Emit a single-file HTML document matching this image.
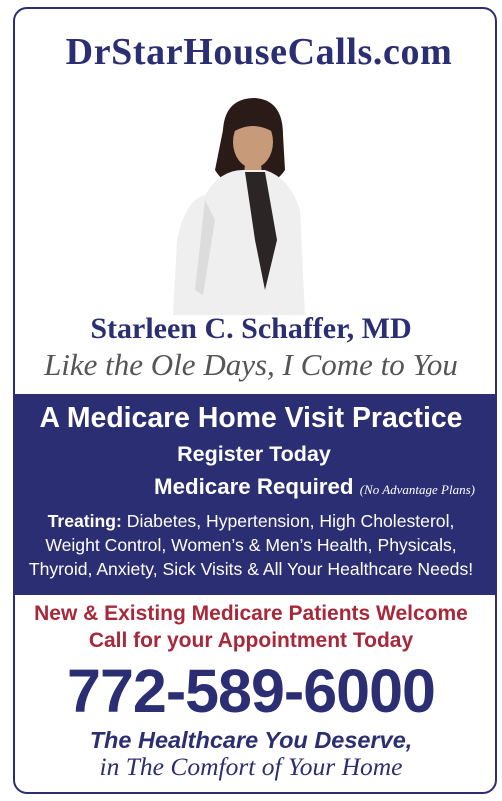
<!DOCTYPE html>
<html><head><style>
*{margin:0;padding:0;box-sizing:border-box}
body{width:502px;height:801px;background:#fff;position:relative;overflow:hidden;font-family:"Liberation Sans",sans-serif}
.box{position:absolute;left:13px;top:7px;width:484px;height:787px;border:2.5px solid #2b2e72;border-radius:14px;overflow:hidden}
.t{position:absolute;left:0;width:502px;text-align:center;white-space:nowrap}
.band{position:absolute;left:13px;top:394px;width:484px;height:201px;background:#2b2e72}
</style></head><body>
<div class="box"></div>
<div class="band"></div>
<div class="t" style="top:30px;left:8px;font:bold 38px 'Liberation Serif',serif;color:#2b2e72;letter-spacing:0.6px">DrStarHouseCalls.com</div>
<svg style="position:absolute;left:165px;top:90px" width="175" height="225" viewBox="0 0 175 225">
<path d="M58 40 Q60 8 90 8 Q118 10 118 45 L120 80 Q110 95 100 88 L80 88 Q62 100 50 80 Z" fill="#2a1a18"/>
<ellipse cx="88" cy="52" rx="20" ry="26" fill="#c79a7a"/>
<path d="M66 30 Q88 18 110 32 L108 42 Q88 30 68 42 Z" fill="#2a1a18"/>
<path d="M80 74 L96 74 L98 95 L78 95 Z" fill="#c79a7a"/>
<path d="M40 105 Q55 80 78 80 L100 80 Q125 88 135 120 L140 225 L8 225 L12 150 Q20 110 40 105 Z" fill="#efefef"/>
<path d="M80 82 L100 82 L112 150 L100 200 L90 150 Z" fill="#2b2525"/>
<path d="M40 110 L30 200 L38 205 L50 130 Z" fill="#dcdcdc"/>
</svg>
<div class="t" style="top:312px;font:bold 30px 'Liberation Serif',serif;color:#2b2e72">Starleen C. Schaffer, MD</div>
<div class="t" style="top:347px;font:italic 31px 'Liberation Serif',serif;color:#555">Like the Ole Days, I Come to You</div>
<div class="t" style="top:402px;font:bold 28.4px 'Liberation Sans',sans-serif;color:#fff">A Medicare Home Visit Practice</div>
<div class="t" style="top:442px;left:254px;width:auto;transform:translateX(-50%);font:bold 21.5px 'Liberation Sans',sans-serif;color:#fff">Register Today</div>
<div class="t" style="top:474px;left:154px;width:auto;font:bold 22.3px 'Liberation Sans',sans-serif;color:#fff">Medicare Required <span style="font:italic 13px 'Liberation Serif',serif">(No Advantage Plans)</span></div>
<div class="t" style="top:509px;font:17.6px 'Liberation Sans',sans-serif;color:#fff;line-height:24px"><b>Treating:</b> Diabetes, Hypertension, High Cholesterol,<br>Weight Control, Women’s &amp; Men’s Health, Physicals,<br>Thyroid, Anxiety, Sick Visits &amp; All Your Healthcare Needs!</div>
<div class="t" style="top:600px;font:bold 21px 'Liberation Sans',sans-serif;color:#a8283a;line-height:27px">New &amp; Existing Medicare Patients Welcome<br>Call for your Appointment Today</div>
<div class="t" style="top:656px;font:bold 61px 'Liberation Sans',sans-serif;color:#2b2e72;letter-spacing:-1px">772-589-6000</div>
<div class="t" style="top:727px;font:italic bold 23.5px 'Liberation Sans',sans-serif;color:#2b2e72">The Healthcare You Deserve,</div>
<div class="t" style="top:752px;font:italic 25.5px 'Liberation Serif',serif;color:#2b2e72">in The Comfort of Your Home</div>
</body></html>
